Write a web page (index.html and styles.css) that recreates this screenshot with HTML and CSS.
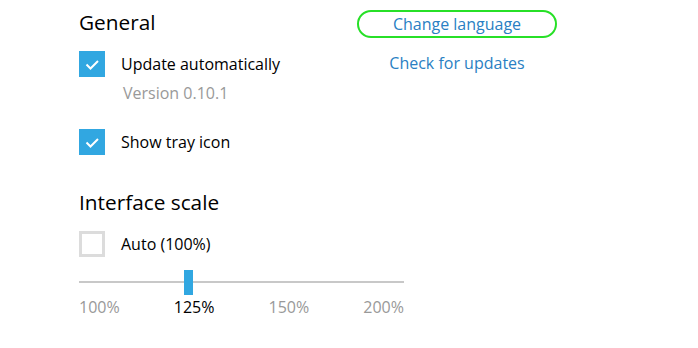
FILE: index.html
```html
<!DOCTYPE html>
<html lang="en">
<head>
    <meta charset="UTF-8">
    <title>Settings</title>
    <link rel="stylesheet" href="styles.css">
</head>
<body>
    <div class="settings">
        <div class="general">
            <div class="general-left">
                <h2 class="section-title">General</h2>
                <div class="check-row">
                    <span class="checkbox checked">
                        <svg width="26" height="26" viewBox="0 0 26 26"><polyline points="7.5,13.5 11.5,17.5 19,10" fill="none" stroke="#fff" stroke-width="2"/></svg>
                    </span>
                    <span class="check-label">Update automatically</span>
                </div>
                <div class="version">Version 0.10.1</div>
                <div class="check-row tray">
                    <span class="checkbox checked">
                        <svg width="26" height="26" viewBox="0 0 26 26"><polyline points="7.5,13.5 11.5,17.5 19,10" fill="none" stroke="#fff" stroke-width="2"/></svg>
                    </span>
                    <span class="check-label">Show tray icon</span>
                </div>
            </div>
            <div class="general-right">
                <a href="#" class="link-button highlighted">Change language</a>
                <a href="#" class="link-button">Check for updates</a>
            </div>
        </div>

        <div class="scale-section">
            <h2 class="section-title">Interface scale</h2>
            <div class="check-row">
                <span class="checkbox"></span>
                <span class="check-label">Auto (100%)</span>
            </div>
            <div class="slider">
                <div class="slider-track"></div>
                <div class="slider-thumb"></div>
            </div>
            <div class="slider-labels">
                <span>100%</span>
                <span class="active">125%</span>
                <span>150%</span>
                <span>200%</span>
            </div>
        </div>
    </div>
</body>
</html>
```

FILE: styles.css
```css
:root {
    --accent-color: #31a7e1;
    --link-color: #2a7fc3;
    --text-color: #000;
    --muted-color: #999;
}

body {
    margin: 0;
    background: #fff;
    font-family: 'Open Sans', 'Noto Sans', sans-serif;
    color: var(--text-color);
}

.settings {
    padding: 9px 0 0 79px;
}

.general {
    display: flex;
}

.general-left {
    width: 278px;
}

.section-title {
    margin: 0;
    font-size: 20.8px;
    font-weight: 400;
    line-height: 26px;
}

.check-row {
    display: flex;
    align-items: center;
    margin-top: 16px;
    height: 26px;
}

.check-row.tray {
    margin-top: 26px;
}

.checkbox {
    width: 26px;
    height: 26px;
    box-sizing: border-box;
    border: 3px solid #dcdcdc;
    flex-shrink: 0;
}

.checkbox.checked {
    border: none;
    background: var(--accent-color);
}

.checkbox svg {
    display: block;
}

.check-label {
    margin-left: 16px;
    font-size: 16px;
    line-height: 20px;
}

.version {
    margin-top: 6px;
    padding-left: 44px;
    font-size: 16px;
    line-height: 20px;
    color: var(--muted-color);
}

.general-right {
    width: 200px;
    display: flex;
    flex-direction: column;
    align-items: center;
    padding-top: 1px;
}

.link-button {
    display: block;
    box-sizing: border-box;
    width: 200px;
    height: 28px;
    line-height: 24px;
    text-align: center;
    font-size: 16px;
    color: var(--link-color);
    text-decoration: none;
}

.link-button.highlighted {
    border: 2.5px solid #27e027;
    border-radius: 14px;
    line-height: 25px;
}

.general-right .link-button + .link-button {
    margin-top: 13px;
}

.scale-section {
    width: 325px;
    margin-top: 34px;
}

.slider {
    position: relative;
    height: 25px;
    margin-top: 13px;
}

.slider-track {
    position: absolute;
    left: 0;
    right: 0;
    top: 11px;
    height: 2px;
    background: #c8c8c8;
}

.slider-thumb {
    position: absolute;
    left: 105px;
    top: 0;
    width: 9px;
    height: 25px;
    background: var(--accent-color);
}

.slider-labels {
    display: flex;
    justify-content: space-between;
    margin-top: 2px;
    font-size: 16px;
    line-height: 20px;
    color: var(--muted-color);
}

.slider-labels .active {
    color: var(--text-color);
}
```
